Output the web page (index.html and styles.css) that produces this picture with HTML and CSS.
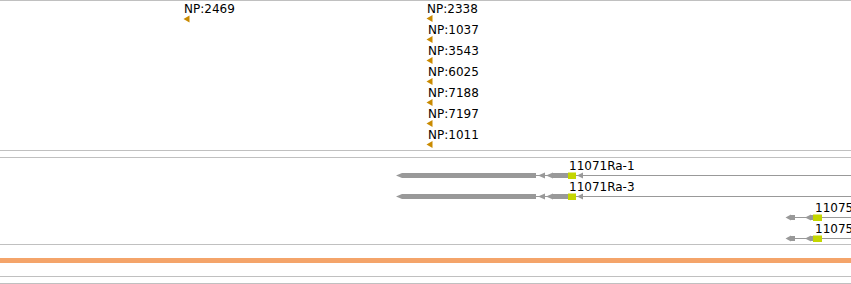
FILE: index.html
```html
<!DOCTYPE html>
<html lang="en">
<head>
  <meta charset="UTF-8">
  <title>Track view</title>
  <link rel="stylesheet" href="styles.css">
</head>
<body>
  <div class="browser">
    <div class="track np-track">
      <svg width="851" height="149">
        <g class="site">
          <text x="184" y="12">NP:2469</text>
          <polygon points="183.5,18 189.5,14.5 189.5,21.5"/>
        </g>
        <g class="site">
          <text x="427" y="12">NP:2338</text>
          <polygon points="426.5,17.5 432.5,14 432.5,21"/>
          <text x="428" y="33">NP:1037</text>
          <polygon points="426.5,38.5 432.5,35 432.5,42"/>
          <text x="428" y="54">NP:3543</text>
          <polygon points="426.5,59.5 432.5,56 432.5,63"/>
          <text x="428" y="75">NP:6025</text>
          <polygon points="426.5,80.5 432.5,77 432.5,84"/>
          <text x="428" y="96">NP:7188</text>
          <polygon points="426.5,101.5 432.5,98 432.5,105"/>
          <text x="428" y="117">NP:7197</text>
          <polygon points="426.5,122.5 432.5,119 432.5,126"/>
          <text x="428" y="138">NP:1011</text>
          <polygon points="426.5,143.5 432.5,140 432.5,147"/>
        </g>
      </svg>
    </div>

    <div class="track gene-track">
      <svg width="851" height="86">
        <!-- 11071Ra-1 -->
        <g class="gene" transform="translate(0,0)">
          <line class="intron" x1="536" y1="17.5" x2="851" y2="17.5"/>
          <polygon class="exon" points="396,17.5 402,15 536,15 536,20 402,20"/>
          <polygon class="exon" points="538,17.5 545,14.5 545,20.5"/>
          <polygon class="exon" points="546,17.5 553,14.5 553,15 568,15 568,20 553,20 553,20.5"/>
          <rect class="cds" x="568" y="14.5" width="8" height="6.5"/>
          <polygon class="exon" points="577,17.5 583,14.5 583,20.5"/>
          <text x="569" y="12">11071Ra-1</text>
        </g>
        <!-- 11071Ra-3 -->
        <g class="gene" transform="translate(0,21)">
          <line class="intron" x1="536" y1="17.5" x2="851" y2="17.5"/>
          <polygon class="exon" points="396,17.5 402,15 536,15 536,20 402,20"/>
          <polygon class="exon" points="538,17.5 545,14.5 545,20.5"/>
          <polygon class="exon" points="546,17.5 553,14.5 553,15 568,15 568,20 553,20 553,20.5"/>
          <rect class="cds" x="568" y="14.5" width="8" height="6.5"/>
          <polygon class="exon" points="577,17.5 583,14.5 583,20.5"/>
          <text x="569" y="12">11071Ra-3</text>
        </g>
        <!-- 11075 -->
        <g class="gene" transform="translate(0,42)">
          <line class="intron" x1="793" y1="17.5" x2="851" y2="17.5"/>
          <polygon class="exon" points="785.5,17.5 791,14.5 791,15 795,15 795,20 791,20 791,20.5"/>
          <polygon class="exon" points="805,17.5 811,14.5 811,15 813,15 813,20 811,20 811,20.5"/>
          <rect class="cds" x="813" y="14.5" width="9" height="6.5"/>
          <text x="815" y="12">11075Ra-1</text>
        </g>
        <g class="gene" transform="translate(0,63)">
          <line class="intron" x1="793" y1="17.5" x2="851" y2="17.5"/>
          <polygon class="exon" points="785.5,17.5 791,14.5 791,15 795,15 795,20 791,20 791,20.5"/>
          <polygon class="exon" points="805,17.5 811,14.5 811,15 813,15 813,20 811,20 811,20.5"/>
          <rect class="cds" x="813" y="14.5" width="9" height="6.5"/>
          <text x="815" y="12">11075Ra-2</text>
        </g>
      </svg>
    </div>

    <div class="band"></div>

    <div class="track empty-track"></div>
  </div>
</body>
</html>
```

FILE: styles.css
```css
body {
  margin: 0;
  background: #ffffff;
  font-family: 'DejaVu Sans', sans-serif;
  overflow: hidden;
}

.browser {
  width: 851px;
}

.track {
  border-top: 1px solid #c0c0c0;
  border-bottom: 1px solid #c0c0c0;
}

.track svg {
  display: block;
}

.np-track {
  height: 149px;
}

.gene-track {
  margin-top: 6px;
  height: 86px;
}

.band {
  margin-top: 13px;
  height: 5px;
  background: #f4a46a;
}

.empty-track {
  margin-top: 13px;
  height: 6px;
}

text {
  font-family: 'DejaVu Sans', sans-serif;
  font-size: 12px;
  fill: #000;
}

.site polygon {
  fill: #c98a00;
}

.gene .intron {
  stroke: #999;
  stroke-width: 1;
}

.gene .exon {
  fill: #999;
}

.gene .cds {
  fill: #c4d600;
}
```
